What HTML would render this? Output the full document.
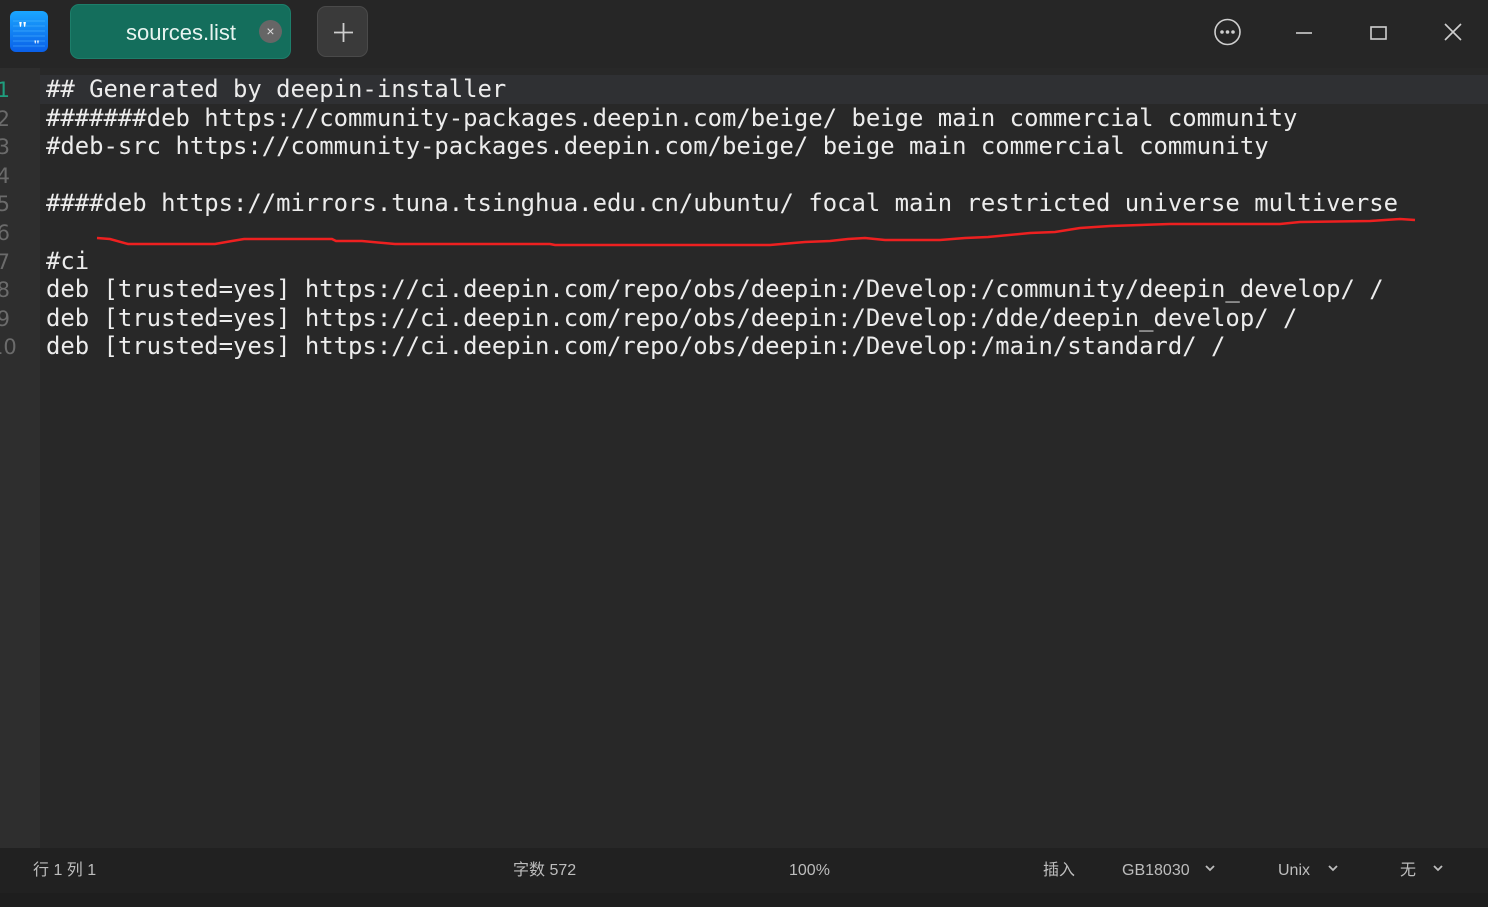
<!DOCTYPE html>
<html><head><meta charset="utf-8"><style>
*{margin:0;padding:0;box-sizing:border-box}
body{width:1488px;height:907px;background:#282828;overflow:hidden;position:relative;font-family:"Liberation Sans","Noto Sans CJK SC",sans-serif}
.title{position:absolute;left:0;top:0;width:1488px;height:68px;background:#262626}
.logo{position:absolute;left:10px;top:11px;width:38px;height:41px;border-radius:6px;background:linear-gradient(#1aa6ff,#0a5fe8)}
.tab{position:absolute;left:70px;top:4px;width:221px;height:55px;border-radius:9px;background:#146e5c;border:1px solid #1d7e6a;color:#e8f4f0;font-size:22px;line-height:55px;padding-left:55px}
.tabx{position:absolute;left:259px;top:20px;width:23px;height:23px;border-radius:50%;background:#666;color:#ddd;font-size:14px;line-height:23px;text-align:center}
.plus{position:absolute;left:317px;top:6px;width:51px;height:51px;border-radius:9px;background:#3a3a3a;border:1px solid #4a4a4a}
.gutter{position:absolute;left:0;top:68px;width:40px;height:780px;background:#2e2e2e}
.hl{position:absolute;left:40px;top:75px;width:1448px;height:29px;background:#2f3033}
.code{position:absolute;left:46px;top:75px;font-family:"DejaVu Sans Mono","Liberation Mono",monospace;font-size:23.9px;line-height:28.6px;color:#ececec;white-space:pre}
.nums{position:absolute;left:-10px;top:76px;font-family:"DejaVu Sans",sans-serif;font-size:21px;line-height:28.6px;color:#6b6b6b;white-space:pre;text-align:right;width:20px}
.status{position:absolute;left:0;top:848px;width:1488px;height:45px;background:#212121;color:#bdbdbd;font-size:16px}
.status span{position:absolute;top:12px;line-height:22px;height:22px}
.bottom{position:absolute;left:0;top:893px;width:1488px;height:14px;background:#1e1e1e}
</style></head><body>
<div class="title"></div>
<div class="logo"><svg width="38" height="41"><g stroke="#5cc0ff" stroke-width="0.7" opacity=".6"><line x1="3" y1="10" x2="35" y2="10"/><line x1="3" y1="15" x2="35" y2="15"/><line x1="3" y1="20" x2="35" y2="20"/><line x1="3" y1="25" x2="35" y2="25"/><line x1="3" y1="30" x2="35" y2="30"/><line x1="3" y1="35" x2="35" y2="35"/></g><text x="7" y="24" fill="#fff" font-size="20" font-weight="bold" font-family="Liberation Serif">"</text><text x="23" y="38" fill="#fff" font-size="13" font-weight="bold" font-family="Liberation Serif">"</text></svg></div>
<div class="tab">sources.list</div>
<div class="tabx">×</div>
<div class="plus"><svg width="51" height="51"><path d="M25.5 16v19M16 25.5h19" stroke="#cfcfcf" stroke-width="1.8"/></svg></div>
<svg style="position:absolute;left:1200px;top:10px" width="288" height="45">
<circle cx="27.5" cy="22" r="12.5" fill="none" stroke="#cfcfcf" stroke-width="1.6"/>
<circle cx="22" cy="22" r="1.8" fill="#cfcfcf"/><circle cx="27.5" cy="22" r="1.8" fill="#cfcfcf"/><circle cx="33" cy="22" r="1.8" fill="#cfcfcf"/>
<path d="M96 23h16" stroke="#cfcfcf" stroke-width="1.6"/>
<rect x="171" y="17" width="15" height="12" fill="none" stroke="#cfcfcf" stroke-width="1.6"/>
<path d="M245 14l16 16M261 14l-16 16" stroke="#cfcfcf" stroke-width="1.6"/>
</svg>
<div class="gutter"></div>
<div class="hl"></div>
<div class="nums"><span style="color:#1f9e7e">1</span>
2
3
4
5
6
7
8
9
10</div>
<div class="code">## Generated by deepin-installer
#######deb https://community-packages.deepin.com/beige/ beige main commercial community
#deb-src https://community-packages.deepin.com/beige/ beige main commercial community

####deb https://mirrors.tuna.tsinghua.edu.cn/ubuntu/ focal main restricted universe multiverse

#ci
deb [trusted=yes] https://ci.deepin.com/repo/obs/deepin:/Develop:/community/deepin_develop/ /
deb [trusted=yes] https://ci.deepin.com/repo/obs/deepin:/Develop:/dde/deepin_develop/ /
deb [trusted=yes] https://ci.deepin.com/repo/obs/deepin:/Develop:/main/standard/ /</div>
<svg style="position:absolute;left:0;top:0" width="1488" height="300"><polyline fill="none" stroke="#ee2020" stroke-width="2.5" points="97,238 110,239 128,244 215,244 232,241 244,239 332,239 336,241 362,241 395,244 550,244 555,245 770,245 805,242 830,241 848,239 865,238 885,240 940,240 965,238 988,237 1030,233 1055,232 1080,228 1110,226 1170,224 1280,224 1300,222 1370,221 1400,219 1415,220"/></svg>
<div class="status">
<span style="left:33px">行 1 列 1</span>
<span style="left:513px">字数 572</span>
<span style="left:789px">100%</span>
<span style="left:1043px">插入</span>
<span style="left:1122px">GB18030</span>
<span style="left:1278px">Unix</span>
<span style="left:1400px">无</span>
<svg style="position:absolute;left:0;top:0" width="1488" height="45"><g fill="none" stroke="#bdbdbd" stroke-width="1.8"><path d="M1206 18l4 4 4-4"/><path d="M1329 18l4 4 4-4"/><path d="M1434 18l4 4 4-4"/></g></svg>
</div>
<div class="bottom"></div>
</body></html>
